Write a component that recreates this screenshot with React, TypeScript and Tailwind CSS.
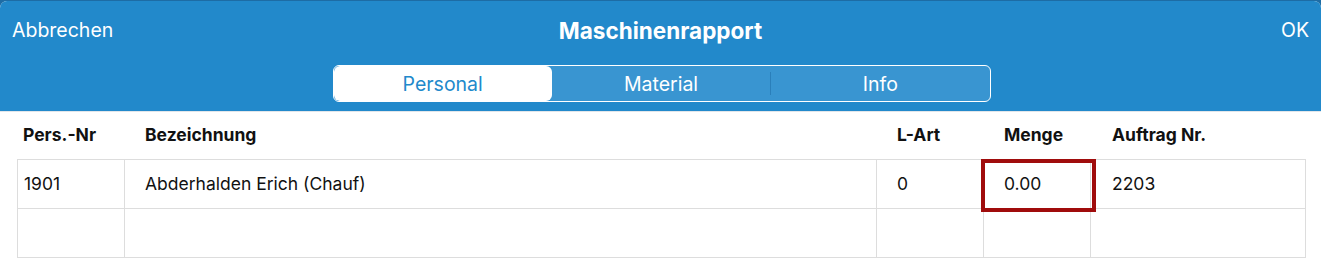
import React from "react";

const font = { fontFamily: "Inter, 'Open Sans', sans-serif" };

export default function App() {
  const cols = "grid grid-cols-[107px_752px_107px_107px_216px]";
  return (
    <div className="w-[1321px] h-[275px] overflow-hidden bg-[#1d6ca5]" style={font}>
      <div className="mt-[1px] h-[290px] rounded-[7px] bg-white overflow-hidden">
        <div className="h-[110px] bg-[#2289cb] flex flex-col">
          <div className="grid grid-cols-[1fr_auto_1fr] items-center h-[58px] pt-[1px] px-[12px] text-white">
            <div className="text-[19.5px]">Abbrechen</div>
            <div className="text-[22.5px] font-bold">Maschinenrapport</div>
            <div className="text-[19.5px] text-right pr-[-1px]">OK</div>
          </div>
          <div className="flex justify-center mt-[6px]">
            <div className="ml-[2px] w-[658px] h-[37px] rounded-[6px] border border-white flex bg-[#3995d1] overflow-hidden text-[19.5px]">
              <div className="flex-1 bg-white text-[#2289cb] flex items-center justify-center pt-[2px] rounded-[6px]">Personal</div>
              <div className="flex-1 text-white flex items-center justify-center pt-[2px]">Material</div>
              <div className="w-px my-[6px] bg-[#2a7fba]"></div>
              <div className="flex-1 text-white flex items-center justify-center pt-[2px]">Info</div>
            </div>
          </div>
        </div>
        <div className="h-px bg-[#e2e6ea]"></div>
        <div className="px-[17px] text-[17.5px] text-[#111]">
          <div className={`${cols} h-[47px] items-center font-bold text-[17.5px]`}>
            <div className="pl-[6px]">Pers.-Nr</div>
            <div className="pl-[21px]">Bezeichnung</div>
            <div className="pl-[21px]">L-Art</div>
            <div className="pl-[21px]">Menge</div>
            <div className="pl-[22px]">Auftrag Nr.</div>
          </div>
          <div className="w-[1289px] border-r border-b border-[#dddddd]">
            <div className={`${cols} h-[49px]`}>
              <div className="border-l border-t border-[#dddddd] pl-[6px] flex items-center">1901</div>
              <div className="border-l border-t border-[#dddddd] pl-[20px] flex items-center">Abderhalden Erich (Chauf)</div>
              <div className="border-l border-t border-[#dddddd] pl-[20px] flex items-center">0</div>
              <div className="relative border-l border-t border-[#dddddd] pl-[20px] flex items-center">
                <div className="absolute left-[-3px] top-[-1px] w-[115px] h-[53px] border-[4px] border-[#a00c0c]"></div>
                <span className="relative">0.00</span>
              </div>
              <div className="border-l border-t border-[#dddddd] pl-[21px] flex items-center">2203</div>
            </div>
            <div className={`${cols} h-[49px]`}>
              <div className="border-l border-t border-[#dddddd]"></div>
              <div className="border-l border-t border-[#dddddd]"></div>
              <div className="border-l border-t border-[#dddddd]"></div>
              <div className="border-l border-t border-[#dddddd]"></div>
              <div className="border-l border-t border-[#dddddd]"></div>
            </div>
          </div>
        </div>
      </div>
    </div>
  );
}
